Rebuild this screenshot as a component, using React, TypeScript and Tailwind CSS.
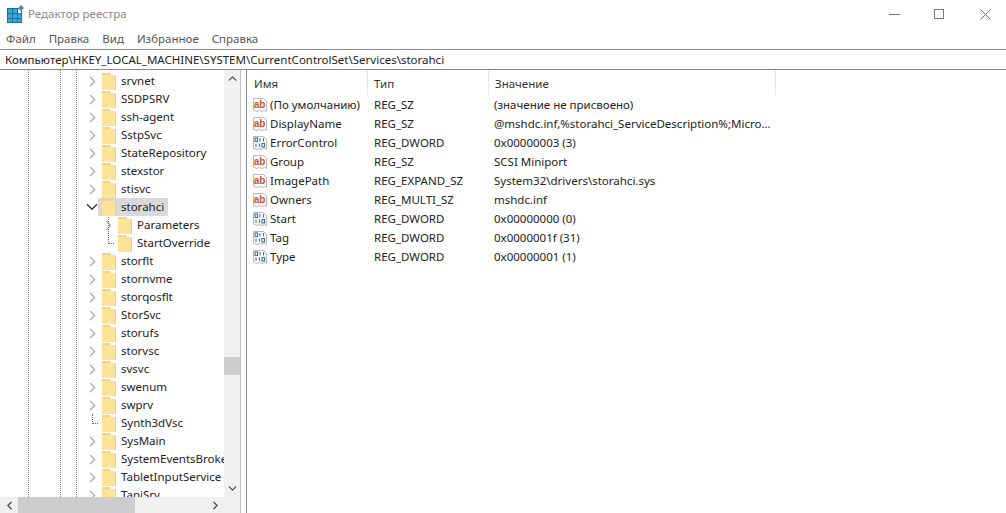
import React from 'react';
import { ChevronRight, ChevronDown, ChevronUp, ChevronLeft } from 'lucide-react';

type TreeRow = { name: string; kind?: 'closed' | 'open' | 'leaf'; child?: boolean; selected?: boolean };

const treeRows: TreeRow[] = [
    { name: 'srvnet' },
    { name: 'SSDPSRV' },
    { name: 'ssh-agent' },
    { name: 'SstpSvc' },
    { name: 'StateRepository' },
    { name: 'stexstor' },
    { name: 'stisvc' },
    { name: 'storahci', kind: 'open', selected: true },
    { name: 'Parameters', child: true },
    { name: 'StartOverride', child: true, kind: 'leaf' },
    { name: 'storflt' },
    { name: 'stornvme' },
    { name: 'storqosflt' },
    { name: 'StorSvc' },
    { name: 'storufs' },
    { name: 'storvsc' },
    { name: 'svsvc' },
    { name: 'swenum' },
    { name: 'swprv' },
    { name: 'Synth3dVsc', kind: 'leaf' },
    { name: 'SysMain' },
    { name: 'SystemEventsBroker' },
    { name: 'TabletInputService' },
    { name: 'TapiSrv' },
];

const values = [
    { name: '(По умолчанию)', type: 'REG_SZ', value: '(значение не присвоено)', icon: 'ab' },
    { name: 'DisplayName', type: 'REG_SZ', value: '@mshdc.inf,%storahci_ServiceDescription%;Micro...', icon: 'ab' },
    { name: 'ErrorControl', type: 'REG_DWORD', value: '0x00000003 (3)', icon: 'bin' },
    { name: 'Group', type: 'REG_SZ', value: 'SCSI Miniport', icon: 'ab' },
    { name: 'ImagePath', type: 'REG_EXPAND_SZ', value: 'System32\\drivers\\storahci.sys', icon: 'ab' },
    { name: 'Owners', type: 'REG_MULTI_SZ', value: 'mshdc.inf', icon: 'ab' },
    { name: 'Start', type: 'REG_DWORD', value: '0x00000000 (0)', icon: 'bin' },
    { name: 'Tag', type: 'REG_DWORD', value: '0x0000001f (31)', icon: 'bin' },
    { name: 'Type', type: 'REG_DWORD', value: '0x00000001 (1)', icon: 'bin' },
];

const AppIcon = () => (
    <svg width="18" height="18" viewBox="0 0 18 18" className="shrink-0">
        <rect x="0" y="3" width="15" height="15" fill="#1f6f9f" />
        <g fill="#39a9dc">
            <rect x="1" y="4" width="4" height="4" />
            <rect x="6" y="4" width="4" height="4" />
            <rect x="1" y="9" width="4" height="4" />
            <rect x="6" y="9" width="4" height="4" />
            <rect x="11" y="9" width="3" height="4" />
            <rect x="1" y="14" width="4" height="3" />
            <rect x="6" y="14" width="4" height="3" />
            <rect x="11" y="14" width="3" height="3" />
        </g>
        <rect x="11" y="4" width="3" height="4" fill="#ffffff" />
        <path d="M14 0l3 3-3 3-3-3z" fill="#3f8fb8" />
    </svg>
);

const Folder = () => (
    <svg width="15" height="18" viewBox="0 0 15 18" className="shrink-0">
        <path d="M0 1h8l1 2h5v15H0z" fill="#fde398" />
        <path d="M0 1h8l1 2H0z" fill="#f7d27a" />
        <path d="M13 3h1v15h-1z" fill="#ecd08a" />
    </svg>
);

const ValueIcon = ({ kind }: { kind: string }) => (
    <svg width="16" height="16" viewBox="0 0 16 16" className="shrink-0">
        <path d="M1.500 1.500h10l3 3v10l-2-1.200-2.500 1.200-2.500-1.200-2.500 1.200-3.500-1.200z" fill="#fff" stroke="#bdb6b6" />
        {kind === 'ab' ? (
            <text x="1.800" y="10.500" fontSize="10" fontWeight="700" fontFamily="'Liberation Sans', sans-serif" fill="#c0562c">ab</text>
        ) : (
            <g fill="none" strokeWidth="1.100" stroke="#35759f">
                <rect x="3" y="3" width="2.500" height="3.500" />
                <path d="M8 3v3.500M11.500 3v3.500" />
                <path d="M4 8.500v3.500M7.500 8.500v3.500" />
                <rect x="10" y="8.500" width="2.500" height="3.500" />
            </g>
        )}
    </svg>
);

const Row = ({ row }: { row: TreeRow }) => {
    const kind = row.kind ?? 'closed';
    return (
        <div className={`flex h-[18px] shrink-0 items-center ${row.child ? 'pl-[104px]' : 'pl-[88px]'}`}>
            <span className="flex w-[10px] shrink-0 items-center">
                {kind === 'closed' && <ChevronRight size={17} strokeWidth={2} className="-ml-[4px] shrink-0 text-[#b0b0b0]" />}
                {kind === 'open' && <ChevronDown size={18} strokeWidth={2.200} className="-ml-[5px] shrink-0 text-[#404040]" />}
                {kind === 'leaf' && (
                    <span className="relative ml-[4px] w-[7px] border-t border-dotted border-[#666]">
                        <span className={`absolute left-0 border-l border-dotted border-[#666] ${row.child ? '-top-[27px] h-[27px]' : '-top-[10px] h-[10px]'}`} />
                    </span>
                )}
            </span>
            <div className={`flex h-[18px] items-center pl-[4px] ${row.selected ? 'bg-[#d9d9d9] pr-1' : ''}`}>
                <Folder />
                <span className="ml-[4px] whitespace-nowrap text-[11.5px] leading-[18px] text-[#222]">{row.name}</span>
            </div>
        </div>
    );
};

const App = () => {
    return (
        <div className="flex h-[513px] w-[1006px] flex-col overflow-hidden bg-white font-['Noto_Sans',sans-serif] text-[#1f1f1f]">
            <div className="flex h-[28px] shrink-0 items-center pl-[7px]">
                <AppIcon />
                <span className="ml-[3px] text-[11.5px] text-[#8a8a8a]">Редактор реестра</span>
                <div className="ml-auto flex items-center">
                    <span className="mr-[34px] h-px w-[11px] bg-[#777]" />
                    <span className="mr-[36px] size-[10px] border border-[#777]" />
                    <svg width="11" height="11" viewBox="0 0 11 11" className="mr-[15px]">
                        <path d="M0.500 0.500l10 10M10.500 0.500l-10 10" stroke="#777" />
                    </svg>
                </div>
            </div>
            <div className="flex h-[21px] shrink-0 items-center gap-[13px] pl-[6px] text-[11.5px] text-[#555]">
                <span>Файл</span>
                <span>Правка</span>
                <span>Вид</span>
                <span>Избранное</span>
                <span>Справка</span>
            </div>
            <div className="flex h-[21px] shrink-0 items-center border-y border-[#8a8a8a] pl-[5px] text-[11.5px] text-[#222]">
                Компьютер\HKEY_LOCAL_MACHINE\SYSTEM\CurrentControlSet\Services\storahci
            </div>
            <div className="flex min-h-0 flex-1">
                <div className="flex w-[241px] shrink-0 flex-col border-r border-[#c0c0c0]">
                    <div className="flex min-h-0 flex-1">
                        <div className="relative min-w-0 flex-1 overflow-hidden pt-[2px]">
                            <span className="absolute top-0 bottom-0 left-[28px] border-l border-dotted border-[#888]" />
                            <span className="absolute top-0 bottom-0 left-[60px] border-l border-dotted border-[#888]" />
                            <span className="absolute top-0 bottom-0 left-[76px] border-l border-dotted border-[#888]" />
                            {treeRows.map((row) => (
                                <Row key={row.name} row={row} />
                            ))}
                        </div>
                        <div className="flex w-[16px] shrink-0 flex-col items-center bg-[#f0f0f0]">
                            <span className="flex h-[17px] items-center justify-center">
                                <ChevronUp size={13} strokeWidth={2.500} className="text-[#555]" />
                            </span>
                            <div className="mt-[270px] h-[18px] w-full bg-[#cdcdcd]" />
                            <span className="mt-auto flex h-[17px] items-center justify-center">
                                <ChevronDown size={13} strokeWidth={2.500} className="text-[#555]" />
                            </span>
                        </div>
                    </div>
                    <div className="flex h-[16px] shrink-0 items-center bg-[#f0f0f0]">
                        <span className="flex w-[18px] justify-center">
                            <ChevronLeft size={13} strokeWidth={2.500} className="text-[#555]" />
                        </span>
                        <div className="h-full w-[117px] bg-[#cdcdcd]" />
                        <span className="mr-[16px] ml-auto flex w-[18px] justify-center">
                            <ChevronRight size={13} strokeWidth={2.500} className="text-[#555]" />
                        </span>
                    </div>
                </div>
                <div className="min-w-0 flex-1 pl-[5px]">
                    <div className="h-full border-l border-[#8a8a8a]">
                        <div className="flex h-[25px] w-[530px] items-center text-[11.5px] text-[#333]">
                            <span className="h-full w-[121px] border-r border-[#e5e5e5] pt-[1px] pl-[7px] leading-[26px]">Имя</span>
                            <span className="h-full w-[121px] border-r border-[#e5e5e5] pt-[1px] pl-[6px] leading-[26px]">Тип</span>
                            <span className="h-full w-[287px] border-r border-[#e5e5e5] pt-[1px] pl-[6px] leading-[26px]">Значение</span>
                        </div>
                        {values.map((v) => (
                            <div key={v.name} className="flex h-[19px] items-center text-[11.5px] text-[#222]">
                                <span className="flex w-[127px] shrink-0 items-center gap-[2px] pl-[5px]">
                                    <ValueIcon kind={v.icon} />
                                    <span className="whitespace-nowrap">{v.name}</span>
                                </span>
                                <span className="w-[120px] shrink-0">{v.type}</span>
                                <span className="whitespace-nowrap">{v.value}</span>
                            </div>
                        ))}
                    </div>
                </div>
            </div>
        </div>
    );
};

export default App;
